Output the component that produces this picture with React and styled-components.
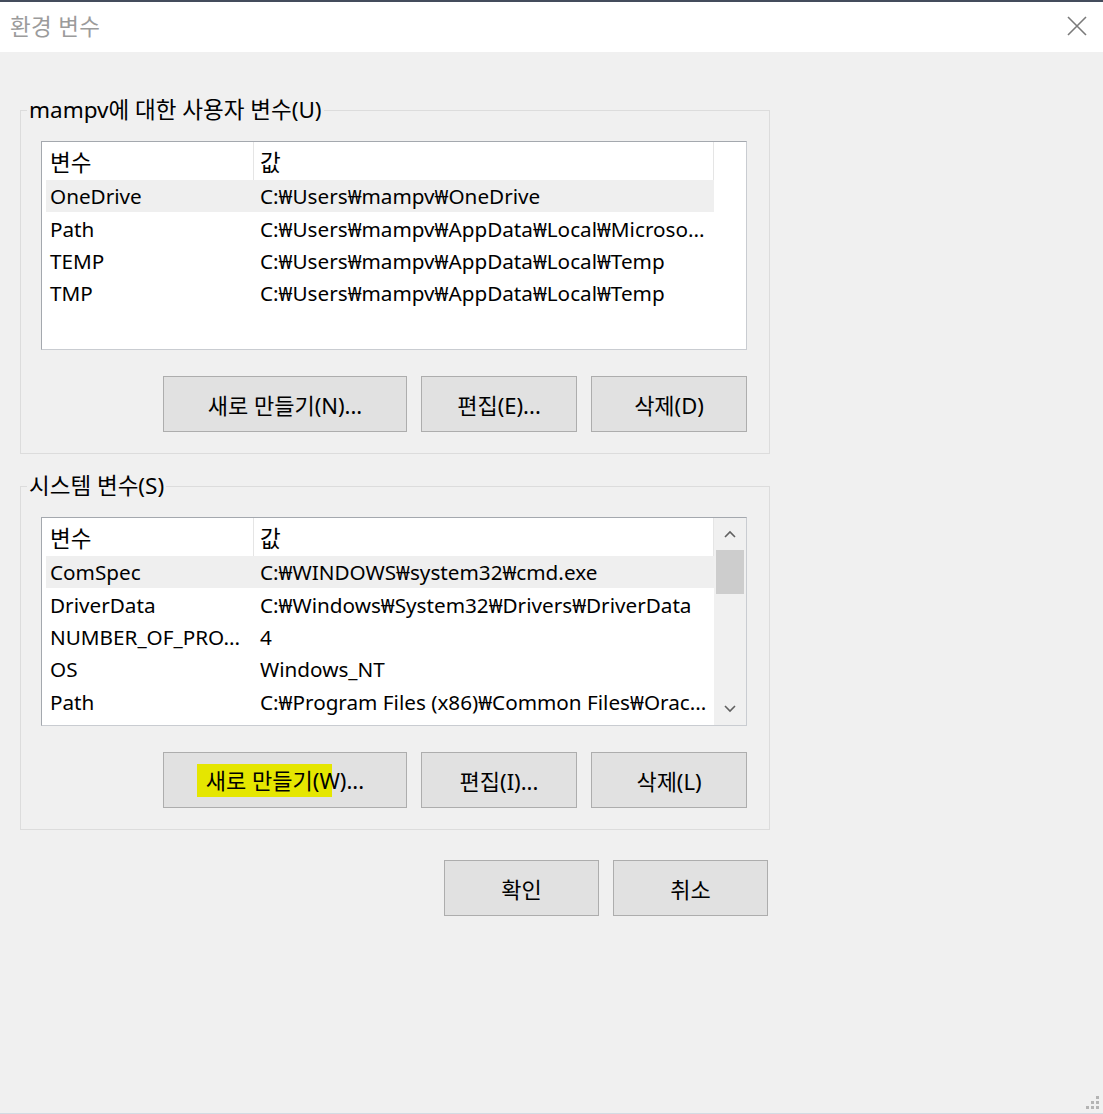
import React from "react";
import styled, { createGlobalStyle } from "styled-components";

const Global = createGlobalStyle`
  html, body {
    margin: 0;
    padding: 0;
    background: #f0f0f0;
  }
  body {
    font-family: "Noto Sans", "Noto Sans CJK KR", sans-serif;
    color: #000;
  }
  * { box-sizing: border-box; }
`;

const Window = styled.div`
  display: flex;
  flex-direction: column;
  width: 1103px;
  height: 1114px;
  border-top: 2px solid #444c5c;
  border-bottom: 1px solid #d3dbe3;
  background: #f0f0f0;
`;

const TitleBar = styled.div`
  display: flex;
  align-items: center;
  justify-content: space-between;
  height: 50px;
  padding: 0 16px 3px 10px;
  background: #fff;
`;

const Title = styled.span`
  font-size: 22.5px;
  color: #9b9b9b;
  letter-spacing: 0.3px;
`;

const Body = styled.div`
  flex: 1;
  display: flex;
  flex-direction: column;
  padding: 44px 0 0 20px;
`;

const Group = styled.fieldset`
  width: 750px;
  margin: 0 0 ${(p) => p.$gap || 0}px 0;
  padding: 17px 22px 21px 20px;
  border: 1px solid #dcdcdc;
  min-width: 0;
`;

const Legend = styled.legend`
  margin-left: -14px;
  padding: 0 2px;
  font-size: 22.5px;
  line-height: 28px;
`;

const List = styled.div`
  display: flex;
  width: 706px;
  height: 209px;
  background: #fff;
  border: 1px solid #a4a8ae;
  border-right-color: #c9ccd1;
  border-bottom-color: #c9ccd1;
`;

const Table = styled.div`
  display: flex;
  flex-direction: column;
  width: 672px;
`;

const HeaderRow = styled.div`
  display: flex;
  height: 38px;
  align-items: center;
  border-right: 1px solid #e5e5e5;
`;

const HeaderCell = styled.div`
  width: ${(p) => p.$w}px;
  height: 100%;
  display: flex;
  align-items: center;
  padding-left: ${(p) => p.$pad}px;
  font-size: 22.5px;
  border-right: ${(p) => (p.$divider ? "1px solid #e5e5e5" : "none")};
`;

const Row = styled.div`
  display: flex;
  align-items: center;
  height: 32.4px;
  margin-left: 4px;
  background: ${(p) => (p.$selected ? "#efefef" : "transparent")};
  font-size: 20.7px;
  white-space: nowrap;
`;

const Cell = styled.div`
  width: ${(p) => p.$w}px;
  padding-left: ${(p) => p.$pad}px;
  overflow: hidden;
`;

const ScrollBar = styled.div`
  display: flex;
  flex-direction: column;
  width: 32px;
  background: #f0f0f0;
`;

const ScrollArrow = styled.div`
  display: flex;
  align-items: center;
  justify-content: center;
  height: 32px;
`;

const Track = styled.div`
  flex: 1;
  display: flex;
  flex-direction: column;
  padding: 0 2px;
`;

const Thumb = styled.div`
  height: 44px;
  background: #cdcdcd;
`;

const ButtonRow = styled.div`
  display: flex;
  justify-content: flex-end;
  gap: 14px;
  margin-top: ${(p) => p.$top || 0}px;
`;

const Button = styled.button`
  width: ${(p) => p.$w}px;
  height: 56px;
  background: #e1e1e1;
  border: 1px solid #adadad;
  font-family: inherit;
  font-size: 22px;
  color: #000;
  padding: 0;
`;

const Marked = styled.span`
  display: inline-block;
  line-height: 33px;
  margin-left: -9px;
  padding-left: 9px;
  background: linear-gradient(#e5e600, #e5e600) no-repeat left top / 135px 100%;
`;

const Footer = styled.div`
  display: flex;
  justify-content: flex-end;
  width: 750px;
  gap: 14px;
  padding-right: 2px;
  margin-top: 30px;
`;

const GripRow = styled.div`
  flex: 1;
  display: flex;
  align-items: flex-end;
  justify-content: flex-end;
  padding: 0 3px 3px 0;
`;

const Chevron = ({ up }) => (
  <svg width="12" height="8" viewBox="0 0 12 8">
    <path
      d={up ? "M1 7 L6 2 L11 7" : "M1 1 L6 6 L11 1"}
      fill="none"
      stroke="#606060"
      strokeWidth="1.6"
    />
  </svg>
);

const CloseIcon = () => (
  <svg width="20" height="20" viewBox="0 0 20 20">
    <path d="M1 1 L19 19 M19 1 L1 19" stroke="#7a7a7a" strokeWidth="1.6" />
  </svg>
);

const Grip = () => (
  <svg width="14" height="14" viewBox="0 0 14 14">
    {[
      [10, 0],
      [5, 5],
      [10, 5],
      [0, 10],
      [5, 10],
      [10, 10],
    ].map(([x, y]) => (
      <rect key={`${x}-${y}`} x={x} y={y} width="3" height="3" fill="#b4b4b4" />
    ))}
  </svg>
);

const userVars = [
  ["OneDrive", "C:₩Users₩mampv₩OneDrive"],
  ["Path", "C:₩Users₩mampv₩AppData₩Local₩Microso..."],
  ["TEMP", "C:₩Users₩mampv₩AppData₩Local₩Temp"],
  ["TMP", "C:₩Users₩mampv₩AppData₩Local₩Temp"],
];

const systemVars = [
  ["ComSpec", "C:₩WINDOWS₩system32₩cmd.exe"],
  ["DriverData", "C:₩Windows₩System32₩Drivers₩DriverData"],
  ["NUMBER_OF_PRO...", "4"],
  ["OS", "Windows_NT"],
  ["Path", "C:₩Program Files (x86)₩Common Files₩Orac..."],
];

const VarTable = ({ rows }) => (
  <Table>
    <HeaderRow>
      <HeaderCell $w={212} $pad={8} $divider>
        변수
      </HeaderCell>
      <HeaderCell $w={459} $pad={6}>
        값
      </HeaderCell>
    </HeaderRow>
    {rows.map(([name, value], i) => (
      <Row key={name + i} $selected={i === 0}>
        <Cell $w={207} $pad={4}>
          {name}
        </Cell>
        <Cell $w={461} $pad={7}>
          {value}
        </Cell>
      </Row>
    ))}
  </Table>
);

export default function App() {
  return (
    <>
      <Global />
      <Window>
        <TitleBar>
          <Title>환경 변수</Title>
          <CloseIcon />
        </TitleBar>
        <Body>
          <Group $gap={18}>
            <Legend>mampv에 대한 사용자 변수(U)</Legend>
            <List>
              <VarTable rows={userVars} />
            </List>
            <ButtonRow $top={26}>
              <Button $w={244}>새로 만들기(N)...</Button>
              <Button $w={156}>편집(E)...</Button>
              <Button $w={156}>삭제(D)</Button>
            </ButtonRow>
          </Group>
          <Group>
            <Legend>시스템 변수(S)</Legend>
            <List>
              <VarTable rows={systemVars} />
              <ScrollBar>
                <ScrollArrow>
                  <Chevron up />
                </ScrollArrow>
                <Track>
                  <Thumb />
                </Track>
                <ScrollArrow>
                  <Chevron />
                </ScrollArrow>
              </ScrollBar>
            </List>
            <ButtonRow $top={26}>
              <Button $w={244}>
                <Marked>새로 만들기(W)...</Marked>
              </Button>
              <Button $w={156}>편집(I)...</Button>
              <Button $w={156}>삭제(L)</Button>
            </ButtonRow>
          </Group>
          <Footer>
            <Button $w={155}>확인</Button>
            <Button $w={155}>취소</Button>
          </Footer>
          <GripRow>
            <Grip />
          </GripRow>
        </Body>
      </Window>
    </>
  );
}
